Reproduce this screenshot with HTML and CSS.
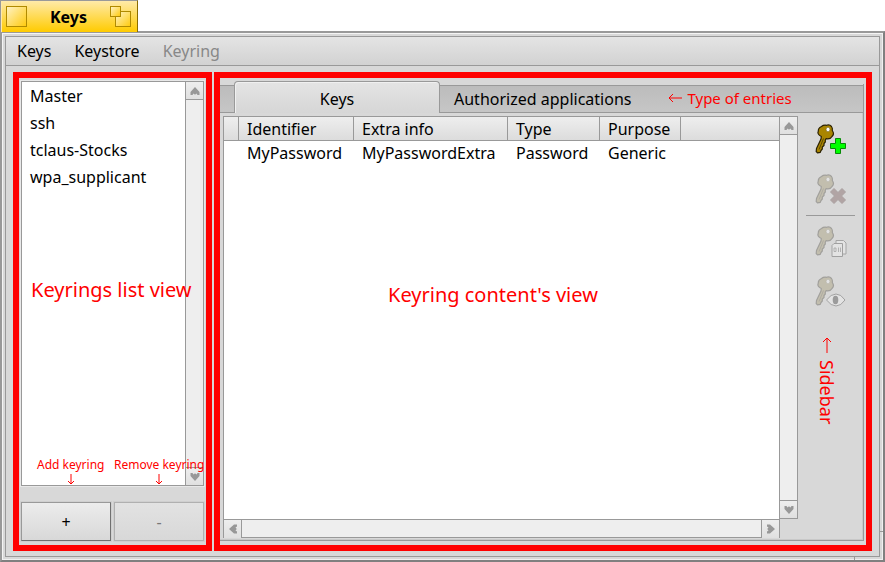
FILE: index.html
```html
<!DOCTYPE html>
<html lang="en">
<head>
<meta charset="utf-8">
<title>Keys</title>
<link rel="stylesheet" href="styles.css">
</head>
<body>
<svg class="defs" aria-hidden="true">
  <defs>
    <symbol id="arrow" viewBox="0 0 10 8">
      <path d="M5 0L9.500 5V8H7.500L6.500 6.500L5 7.800L3.500 6.500L2.500 8H.500V5z"/>
    </symbol>
    <symbol id="key" viewBox="0 0 32 32">
      <path d="M6.500 3.500Q8.500 1.800 11.500 2.300Q14.500 1.200 16.500 3.500Q17.700 5 17.300 7.500Q19.800 11 17 13.500Q15.500 16.500 11 15.700L10.300 17L10.300 19L9 20.500L9 22.500L7.300 24L7.300 26L6 27.500L5.300 29.300L2.500 29.800L1.200 28.500L1.500 25.500L6 16L6.300 13.500Q1.800 11 3.300 8.300Q3 5 6.500 3.500Z" fill="#a98500" stroke="#2a2000" stroke-width="1.200" stroke-linejoin="round"/>
      <path d="M8.500 15.500L4 26.500" fill="none" stroke="#5c4800" stroke-width="1"/>
      <ellipse cx="13" cy="6.500" rx="1.900" ry="2.200" fill="#fff" stroke="#6b5812" stroke-width=".5"/>
    </symbol>
  </defs>
</svg>
<div class="desktop">
  <header class="title-tab">
    <button class="close" aria-label="Close"></button>
    <h1>Keys</h1>
    <button class="zoom" aria-label="Zoom"><span class="big"></span><span class="small"></span></button>
  </header>
  <div class="frame">
    <span class="grip-right"></span><span class="grip-bottom"></span>
    <div class="window">
      <nav class="menu">
        <button>Keys</button><button>Keystore</button><button disabled>Keyring</button>
      </nav>
      <main class="panes">
        <section class="pane keyrings">
          <div class="list-box">
            <ul class="list"><li>Master</li><li>ssh</li><li>tclaus-Stocks</li><li>wpa_supplicant</li></ul>
            <div class="scroll vertical">
              <button aria-label="Scroll up"><svg><use href="#arrow"/></svg></button><i></i>
              <button aria-label="Scroll down"><svg class="down"><use href="#arrow"/></svg></button>
            </div>
          </div>
          <div class="actions"><button>+</button><button disabled>-</button></div>
          <p class="note large note-list">Keyrings list view</p>
          <p class="note tiny note-add">Add keyring<svg viewBox="0 0 8 11"><path d="M4 0v10M1 7l3 3 3-3"/></svg></p>
          <p class="note tiny note-remove">Remove keyring<svg viewBox="0 0 8 11"><path d="M4 0v10M1 7l3 3 3-3"/></svg></p>
        </section>
        <section class="pane contents">
          <div class="tabs">
            <button class="tab active">Keys</button><button class="tab">Authorized applications</button>
            <p class="note note-tabs"><svg viewBox="0 0 15 10"><path d="M14 5H1M5 1L1 5l4 4"/></svg>Type of entries</p>
          </div>
          <div class="tab-body">
            <div class="grid-box">
              <div class="table-area">
                <table>
                  <thead><tr><th class="c0"></th><th class="c1">Identifier</th><th class="c2">Extra info</th><th class="c3">Type</th><th class="c4">Purpose</th><th></th></tr></thead>
                  <tbody><tr><td></td><td>MyPassword</td><td>MyPasswordExtra</td><td>Password</td><td>Generic</td><td></td></tr></tbody>
                </table>
                <p class="note large note-content">Keyring content's view</p>
              </div>
              <div class="scroll vertical">
                <button aria-label="Scroll up"><svg><use href="#arrow"/></svg></button><i></i>
                <button aria-label="Scroll down"><svg class="down"><use href="#arrow"/></svg></button>
              </div>
              <div class="scroll horizontal">
                <button aria-label="Scroll left"><svg class="left"><use href="#arrow"/></svg></button><i></i>
                <button aria-label="Scroll right"><svg class="right"><use href="#arrow"/></svg></button>
              </div>
            </div>
            <aside class="sidebar">
              <button aria-label="Add key"><svg viewBox="0 0 32 32"><use href="#key"/><path d="M20.500 15.500h5v5h5v5h-5v5h-5v-5h-5v-5h5z" fill="#0f0" stroke="#078a07"/></svg></button>
              <button aria-label="Remove key" disabled><svg viewBox="0 0 32 32"><use href="#key"/><path d="M19 15.500l4 4 4-4 3.500 3.500-4 4 4 4-3.500 3.500-4-4-4 4-3.500-3.500 4-4-4-4z" fill="#8e2020" stroke="#651515"/></svg></button>
              <hr>
              <button aria-label="Copy key data" disabled><svg viewBox="0 0 32 32"><use href="#key"/><path d="M21 15.500h7.500l2.500 2.500v11h-10z" fill="#fff" stroke="#333"/><path d="M19 18.500h8.500v13h-10.500v-11z" fill="#fff" stroke="#222"/><path d="M19 23h2v3.500h-2zM23.500 22.500v4.500M25.500 22.500v4.500" fill="none" stroke="#333" stroke-width=".8"/></svg></button>
              <button aria-label="Show key" disabled><svg viewBox="0 0 32 32"><use href="#key"/><path d="M11.500 25Q16 19 21 19T30 25Q26 31 21 31T11.500 25Z" fill="#fff" stroke="#222"/><ellipse cx="20.500" cy="25" rx="2.800" ry="4.200" fill="#111"/></svg></button>
              <p class="note note-sidebar"><svg viewBox="0 0 10 17"><path d="M5 16V1M1 5l4-4 4 4"/></svg>Sidebar</p>
            </aside>
          </div>
        </section>
      </main>
    </div>
  </div>
</div>
</body>
</html>
```
FILE: styles.css
```css
* { box-sizing: border-box; }
body { margin: 0; background: #fff; color: #000; font: 16px/22px "Noto Sans", sans-serif; }
button { font: inherit; color: inherit; margin: 0; padding: 0; border: 0; background: none; }
p, h1, ul { margin: 0; padding: 0; }
.defs { position: absolute; width: 0; height: 0; }
.desktop { min-height: 100vh; display: flex; flex-direction: column; }

.title-tab {
  position: relative; z-index: 1;
  display: flex; align-items: center; justify-content: space-between;
  width: 138px; height: 32px; padding: 0 6px 0 5px; flex: none;
  border: 1px solid #999; border-right-color: #8a6c00; border-bottom: 0;
  box-shadow: inset 1px 1px #ffe9a8;
  background: linear-gradient(#ffeaa8, #ffcb00);
}
.title-tab h1 { font-size: 16px; line-height: 22px; font-weight: 700; }
.close, .zoom span { border: 1px solid #b08a00; background: linear-gradient(135deg, #fff2c2, #ffcb10); }
.close { width: 21px; height: 21px; }
.zoom { position: relative; width: 21px; height: 21px; }
.zoom span { position: absolute; }
.zoom .big { right: 0; bottom: 0; width: 16px; height: 16px; }
.zoom .small { left: 0; top: 0; width: 11px; height: 11px; }

.frame {
  position: relative; flex: 1; display: flex; padding: 3px;
  margin-top: -1px;
  border: 2px solid #999; border-right-color: #808080; border-bottom-color: #808080;
  background: #d8d8d8; box-shadow: inset 1px 1px #f4f4f4, inset -1px -1px #f0f0f0;
}
.grip-right, .grip-bottom { position: absolute; background: #999; }
.grip-right { right: 0; bottom: 28px; width: 4px; height: 1px; }
.grip-bottom { right: 28px; bottom: 0; width: 1px; height: 4px; }
.window { flex: 1; display: flex; flex-direction: column; border: 1px solid #999; min-width: 0; }
.menu {
  display: flex; gap: 23px; height: 29px; padding: 0 11px; flex: none;
  border-bottom: 1px solid #999; background: linear-gradient(#e4e4e4, #d2d2d2);
}
.menu button:disabled { color: #888; }
.panes { flex: 1; display: flex; gap: 2px; padding: 6px 7px 5px; }
.pane { position: relative; display: flex; flex-direction: column; border: 6px solid #f00; min-width: 0; }
.keyrings { width: 199px; padding: 3px 2px 4px; flex: none; }
.contents { flex: 1; padding: 3px 2px 4px 0; }

.list-box { flex: 1; display: flex; border: 1px solid #999; background: #fff; box-shadow: 0 0 0 1px #e8e8e8; }
.list { flex: 1; list-style: none; padding: 1px 8px; }
.list li { line-height: 27px; }
.scroll { display: flex; background: #eee; }
.scroll button { display: grid; place-items: center; flex: none; background: linear-gradient(#eee, #e0e0e0); }
.scroll svg { width: 10px; height: 8px; fill: #989898; }
.scroll i { flex: 1; }
.vertical { flex-direction: column; width: 18px; border-left: 1px solid #999; }
.vertical button { width: 17px; height: 17px; }
.vertical i { border: solid #999; border-width: 1px 0; }
.horizontal { height: 19px; border: solid #999; border-width: 1px 1px 0 0; }
.horizontal button { width: 17px; height: 18px; }
.horizontal i { border: solid #999; border-width: 0 1px; }
.down { transform: rotate(180deg); }
.left { transform: rotate(-90deg); }
.right { transform: rotate(90deg); }

.actions { display: grid; grid-template-columns: 1fr 1fr; gap: 3px; margin-top: 16px; }
.actions button {
  height: 39px; border: 1px solid #999; border-right-color: #707070; border-bottom-color: #707070;
  background: linear-gradient(#ececec, #d8d8d8); box-shadow: 0 0 0 1px #cfcfcf;
}
.actions button:disabled { color: #777; border-color: #b0b0b0; background: linear-gradient(#e2e2e2, #d8d8d8); }

.tabs {
  display: flex; height: 32px; padding-left: 14px; flex: none;
  background: linear-gradient(#d8d8d8 4px, #999 4px, #999 5px, #bcbcbc 5px, #c6c6c6 31px, #999 31px);
  border-right: 1px solid #999; border-image: linear-gradient(transparent 4px, #999 4px) 1;
  border-width: 0 1px 0 0;
}
.tab { padding: 4px 14px 0; height: 32px; }
.active {
  width: 206px; padding: 2px 0 0; border: solid #999; border-width: 1px 1px 0;
  border-radius: 4px 4px 0 0; background: linear-gradient(#e4e4e4, #d6d6d6); box-shadow: inset 1px 1px #f0f0f0;
}
.tab-body { flex: 1; display: flex; padding: 3px 0 2px 3px; border: solid #999; border-width: 0 1px 1px 0; box-shadow: inset -1px -1px #c8c8c8; }
.grid-box {
  flex: 1; display: grid; grid-template: 1fr 19px / 1fr 19px; min-width: 0;
  border: solid #999; border-width: 1px 0 0 1px;
}
.grid-box .vertical { width: 19px; border-right: 1px solid #999; border-bottom: 1px solid #999; }
.grid-box .horizontal { grid-column: 1; width: calc(100% + 1px); border-bottom: 1px solid #999; }
.table-area { position: relative; background: #fff; min-width: 0; }
table { width: 100%; table-layout: fixed; border-collapse: separate; border-spacing: 0; }
th, td { padding: 0 8px; text-align: left; font-weight: 400; white-space: nowrap; }
th { height: 24px; border: solid #999; border-width: 0 1px 1px 0; background: linear-gradient(#eee, #dcdcdc); }
th:last-child { border-right: 0; }
td { height: 24px; }
.c0 { width: 15px; padding: 0; }
.c1 { width: 115px; }
.c2 { width: 154px; }
.c3 { width: 92px; }
.c4 { width: 81px; }

.sidebar { width: 65px; padding: 7px 8px; display: flex; flex-direction: column; align-items: center; }
.sidebar button { width: 32px; height: 32px; margin-bottom: 18px; flex: none; }
.sidebar button svg { display: block; width: 32px; height: 32px; }
.sidebar button:disabled svg { filter: saturate(.4); opacity: .3; }
.sidebar button:nth-of-type(2) { margin-bottom: 10px; }
.sidebar hr { width: 100%; height: 1px; margin: 0 0 9px; border: 0; background: #999; flex: none; }

.note { color: #f00; white-space: nowrap; }
.note svg { fill: none; stroke: #f00; stroke-width: 1; }
.large { position: absolute; font-size: 20px; line-height: 28px; }
.tiny { position: absolute; bottom: 60px; display: flex; flex-direction: column; align-items: center; font-size: 12px; line-height: 18px; }
.tiny svg { width: 8px; height: 11px; }
.note-list { left: 12px; top: 198px; }
.note-add { left: 18px; }
.note-remove { left: 95px; }
.note-content { left: 164px; top: 164px; }
.note-tabs { display: flex; align-items: center; gap: 4px; margin-left: 23px; padding-top: 2px; font-size: 15px; }
.note-tabs svg { width: 15px; height: 10px; }
.note-sidebar {
  writing-mode: vertical-rl; display: flex; align-items: center; gap: 6px; align-self: flex-start;
  margin: 12px 0 0 9px; font-size: 18px; line-height: 24px;
}
.note-sidebar svg { width: 10px; height: 17px; }
```
